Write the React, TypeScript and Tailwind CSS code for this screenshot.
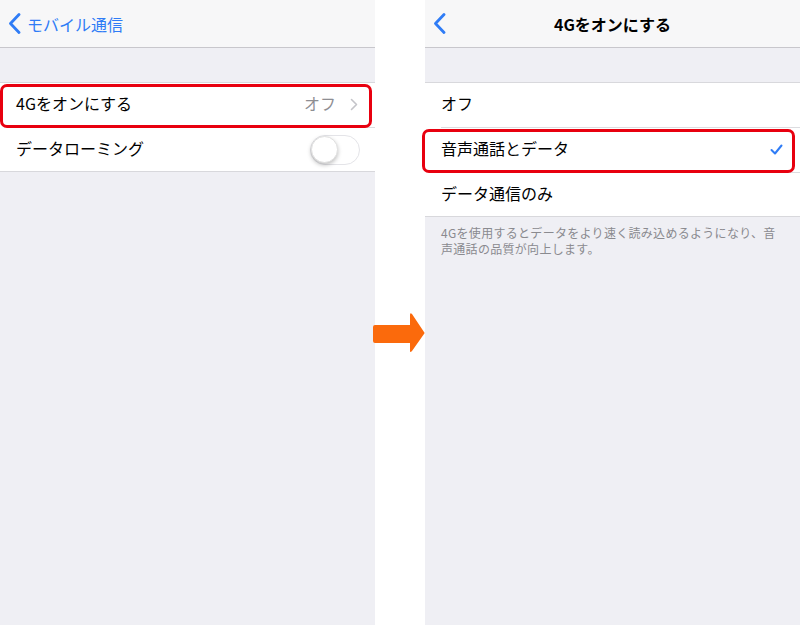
import React from "react";

const font = { fontFamily: '"Noto Sans CJK JP", "Noto Sans", sans-serif' };

function Chevron({ className }: { className?: string }) {
  return (
    <svg width="13" height="21" viewBox="0 0 13 21" className={className}>
      <path d="M11 1.5 L2.5 10.5 L11 19.5" fill="none" stroke="#2f7cf6" strokeWidth="2.8" strokeLinecap="round" strokeLinejoin="round" />
    </svg>
  );
}

export default function App() {
  return (
    <div className="w-[800px] h-[625px] flex bg-white overflow-hidden" style={font}>
      {/* Left panel */}
      <div className="w-[375px] h-full bg-[#efeff4] flex flex-col">
        <div className="h-[48px] bg-[#f7f7f8] border-b border-[#c8c7cc] flex items-center pl-[8px] gap-[6px]">
          <Chevron />
          <span className="text-[16px] text-[#2f7cf6] leading-none">モバイル通信</span>
        </div>
        <div className="h-[34px]" />
        <div className="bg-white border-t border-b border-[#d8d8dc]">
          <div className="relative h-[44px] flex items-center pl-[16px] pr-[17px]">
            <span className="text-[16px] leading-[20px] pb-[4px] text-black flex-1">4Gをオンにする</span>
            <span className="text-[16px] leading-[20px] pb-[4px] text-[#8e8e93]">オフ</span>
            <svg width="8" height="13" viewBox="0 0 8 13" className="ml-[14px] mb-[2px]">
              <path d="M1.5 1.5 L6.5 6.5 L1.5 11.5" fill="none" stroke="#c4c4c9" strokeWidth="1.6" strokeLinecap="round" strokeLinejoin="round" />
            </svg>
            <div className="absolute left-0 right-[3px] top-[1px] bottom-[-1px] border-[3px] border-[#e8000f] rounded-[7px]" />
          </div>
          <div className="ml-[16px] h-px bg-[#dcdce0]" />
          <div className="h-[43px] flex items-center pl-[16px] pr-[15px]">
            <span className="text-[16px] leading-[20px] pb-[4px] text-black flex-1">データローミング</span>
            <div className="w-[50px] h-[30px] rounded-full border-[1.5px] border-[#e4e4e8] bg-white relative">
              <div className="absolute left-0 top-0 w-[27px] h-[27px] rounded-full bg-white shadow-[0_2px_4px_rgba(0,0,0,0.25)] border border-[#e0e0e0]" />
            </div>
          </div>
        </div>
      </div>

      {/* Middle with arrow */}
      <div className="w-[50px] h-full pt-[313px]">
        <svg width="52" height="40" viewBox="0 0 52 40" className="ml-[-2px]">
          <path d="M2 12 Q0 12 0 14 L0 28 Q0 30 2 30 L37 30 L37 38 Q37 40 39 38 L51 21 Q52 20 51 19 L39 1 Q37 -1 37 2 L37 12 Z" fill="#fb6a0c" />
        </svg>
      </div>

      {/* Right panel */}
      <div className="w-[375px] h-full bg-[#efeff4] flex flex-col">
        <div className="h-[48px] bg-[#f7f7f8] border-b border-[#c8c7cc] flex items-center relative pl-[8px]">
          <Chevron />
          <span className="absolute inset-0 flex items-center justify-center text-[16px] font-bold text-black leading-none">4Gをオンにする</span>
        </div>
        <div className="h-[34px]" />
        <div className="bg-white border-t border-b border-[#d8d8dc]">
          <div className="h-[44px] flex items-center pl-[16px]">
            <span className="text-[16px] leading-[20px] pb-[4px] text-black">オフ</span>
          </div>
          <div className="ml-[16px] h-px bg-[#dcdce0]" />
          <div className="relative h-[44px] flex items-center pl-[16px] pr-[17px]">
            <span className="text-[16px] leading-[20px] pb-[4px] text-black flex-1">音声通話とデータ</span>
            <svg width="13" height="11" viewBox="0 0 13 11" className="mb-[2px]">
              <path d="M1.5 6 L5 9.5 L11.5 1.5" fill="none" stroke="#2f7cf6" strokeWidth="2" strokeLinecap="round" strokeLinejoin="round" />
            </svg>
            <div className="absolute left-[-3px] right-[5px] top-[1px] bottom-[-1px] border-[3px] border-[#e8000f] rounded-[7px]" />
          </div>
          <div className="ml-[16px] h-px bg-[#dcdce0]" />
          <div className="h-[43px] flex items-center pl-[16px]">
            <span className="text-[16px] leading-[20px] pb-[4px] text-black">データ通信のみ</span>
          </div>
        </div>
        <div className="pl-[16px] pr-[10px] pt-[8px] text-[12px] leading-[16px] tracking-[0.3px] text-[#8a8a8f] whitespace-nowrap">
          4Gを使用するとデータをより速く読み込めるようになり、音
          <br />
          声通話の品質が向上します。
        </div>
      </div>
    </div>
  );
}
